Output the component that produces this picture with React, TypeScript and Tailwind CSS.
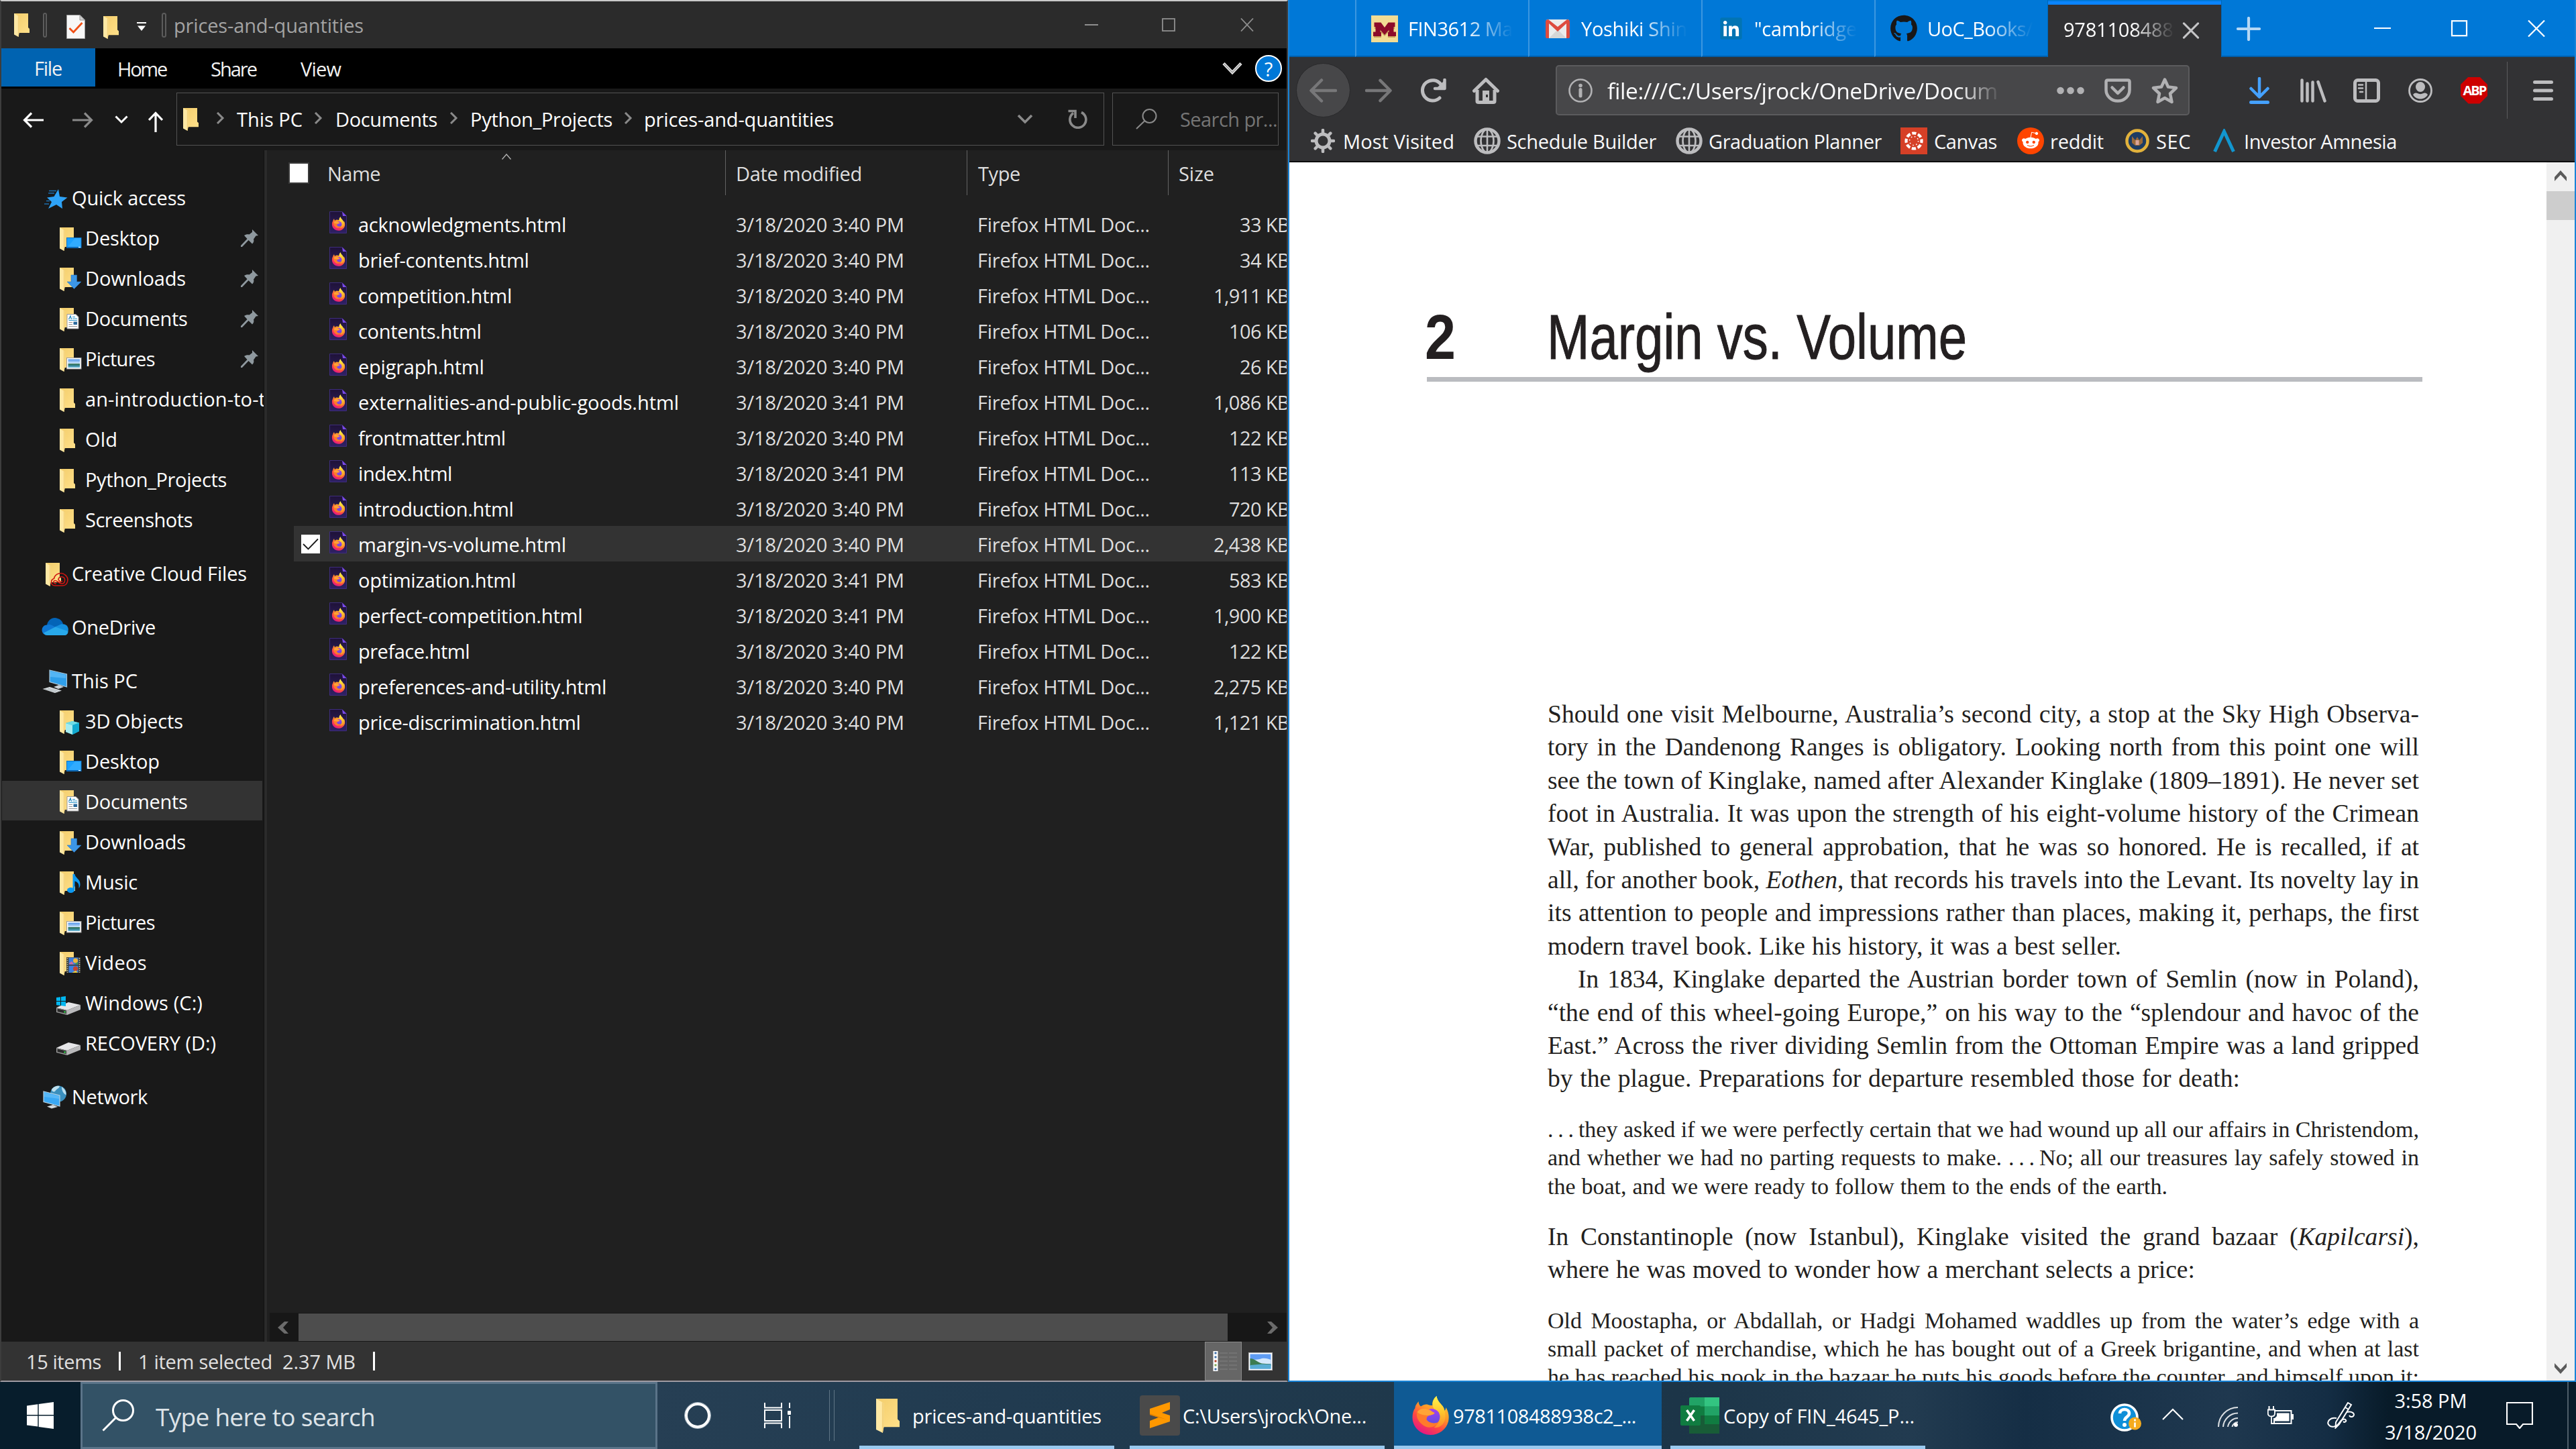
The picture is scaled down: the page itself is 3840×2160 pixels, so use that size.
import { useLayoutEffect, useRef, type ReactNode } from 'react'
import { FaGithub, FaLinkedin, FaRedditAlien } from 'react-icons/fa'

type TProps = { w?: number; mode?: 'letter' | 'word' | 'scale'; pad?: number; className?: string; children: ReactNode }

/* Single line of text whose tracking is tuned at mount so that it spans w pixels. */
function T({ w, mode = 'letter', pad = 3, className = '', children }: TProps) {
  const ref = useRef<HTMLSpanElement>(null)
  useLayoutEffect(() => {
    const el = ref.current
    if (!el || !w) return
    el.style.letterSpacing = '0px'
    el.style.wordSpacing = '0px'
    el.style.transform = 'none'
    const natural = el.getBoundingClientRect().width
    const text = el.textContent || ''
    const target = w + pad
    if (mode === 'letter') el.style.letterSpacing = `${(target - natural) / text.length}px`
    if (mode === 'word') el.style.wordSpacing = `${(target - natural) / Math.max(1, text.split(' ').length - 1)}px`
    if (mode === 'scale') el.style.transform = `scaleX(${target / natural})`
  }, [w, mode, pad])
  return (
    <span ref={ref} className={'inline-block shrink-0 origin-left whitespace-pre ' + (mode === 'letter' ? 'pl-[1px] ' : '') + className}>
      {children}
    </span>
  )
}

/* ---------- shared drawings ---------- */

function FolderShape() {
  return (
    <>
      <path d="M5 4H26V25L28 27V33H5Z" fill="url(#folderBack)" />
      <path d="M5 4L12.500 8.500V33L11.500 39L5 35.500Z" fill="#fee8a4" />
      <path d="M12.500 8.500V33L11.500 39L10.800 38.500V7.500Z" fill="#f3d27c" />
    </>
  )
}

function Folder({ className = '' }: { className?: string }) {
  return (
    <svg viewBox="5 4 23 35" preserveAspectRatio="none" className={'shrink-0 ' + className}>
      <FolderShape />
    </svg>
  )
}

function FirefoxShape() {
  return (
    <>
      <path
        d="M5 18C5 14 8 11 10 8C10.500 12 11.500 14 13.500 15.500C17 13 20 12 23 12.500C26 14 28 14 31 14C30 8 33 3 37 0C38 7 42 10 46 15C48 17 48.500 20 49 22C50.500 20 51 18 51 17C55 24 56 31 54.500 38C51.500 50 40.500 58 28 58C13 58 1 46 1 32C1 26 2.500 21 5 18Z"
        fill="url(#ffBody)"
      />
      <path d="M37 0C38 7 42 10 46 15C49 20 51 27 49.500 35C47.500 44 40 48 33 47C40 42 43 34 39 26C36 21 31 19 31 13C31 7 34 3 37 0Z" fill="url(#ffFlame)" />
      <circle cx="30" cy="31" r="12" fill="url(#ffGlobe)" />
      <path d="M8 24C12 18 19 18 24 20C29 21 30 24 34 25C33 28 29 28 26 29C23 30 22 32 22 35C25 40 33 42 40 39C36 47 23 50 15 42C9 37 6 30 8 24Z" fill="#ff7a2b" />
      <path d="M8 24C12 18 19 18 24 20C29 21 30 24 34 25C33 28 29 28 26 29C20 29 12 28 8 24Z" fill="#ffa436" />
    </>
  )
}

function Defs() {
  return (
    <svg className="absolute h-0 w-0">
      <defs>
        <linearGradient id="folderBack" x1="0" y1="0" x2="1" y2="1">
          <stop offset="0" stopColor="#f3cd6b" />
          <stop offset="1" stopColor="#ffe08a" />
        </linearGradient>
        <linearGradient id="ffBody" x1="0.8" y1="0.1" x2="0.3" y2="1">
          <stop offset="0" stopColor="#ffce35" />
          <stop offset="0.35" stopColor="#ff9a28" />
          <stop offset="0.65" stopColor="#ff4a41" />
          <stop offset="1" stopColor="#e31587" />
        </linearGradient>
        <linearGradient id="ffFlame" x1="0" y1="0" x2="0" y2="1">
          <stop offset="0" stopColor="#fff44f" />
          <stop offset="0.5" stopColor="#ffc72e" />
          <stop offset="1" stopColor="#ff8a2a" />
        </linearGradient>
        <linearGradient id="ffGlobe" x1="0" y1="0" x2="0" y2="1">
          <stop offset="0" stopColor="#a640f0" />
          <stop offset="1" stopColor="#5a4fe0" />
        </linearGradient>
        <linearGradient id="docPurple" x1="0" y1="0" x2="0" y2="1">
          <stop offset="0" stopColor="#1f1238" />
          <stop offset="1" stopColor="#2f2065" />
        </linearGradient>
        <linearGradient id="sky" x1="0" y1="0" x2="0" y2="1">
          <stop offset="0" stopColor="#4f93e8" />
          <stop offset="0.5" stopColor="#cfe6fa" />
          <stop offset="0.55" stopColor="#3f7a5a" />
          <stop offset="0.75" stopColor="#2f7f8c" />
          <stop offset="1" stopColor="#7cc4e4" />
        </linearGradient>
      </defs>
    </svg>
  )
}

function FirefoxDoc() {
  return (
    <svg viewBox="0 0 26 33" className="h-[33px] w-[26px] shrink-0">
      <path d="M0.500 0.500H19L25.500 7V32.500H0.500Z" fill="url(#docPurple)" stroke="#3d2d7c" />
      <path d="M19 0.500L25.500 7H20Z" fill="#7a4be8" />
      <svg x="3.500" y="8" width="20" height="21" viewBox="0 0 56 58">
        <FirefoxShape />
      </svg>
    </svg>
  )
}

/* ---------- file explorer ---------- */

type SideIcon =
  | 'star' | 'folder' | 'desktop' | 'downloads' | 'documents' | 'pictures' | 'music' | 'videos' | 'objects'
  | 'cloudfolder' | 'onedrive' | 'pc' | 'windrive' | 'drive' | 'network'

function DriveShape() {
  return (
    <>
      <path d="M0 27L18 19L36 23L16 31Z" fill="#e6e6e8" />
      <path d="M16 31L36 23V30L16 38Z" fill="#b9b9bb" />
      <path d="M0 27L16 31V38L0 34Z" fill="#9a9a9a" />
      <path d="M1.500 28.500L14.500 31.500V36L1.500 33Z" fill="#2a2a2a" />
      <circle cx="12.500" cy="33.500" r="1.200" fill="#2fe04a" />
    </>
  )
}

function SideGlyph({ kind }: { kind: SideIcon }) {
  const inFolder = ['folder', 'desktop', 'downloads', 'documents', 'pictures', 'music', 'videos', 'objects'].includes(kind)
  return (
    <svg viewBox="0 0 40 40" className="h-[40px] w-[40px] shrink-0 overflow-visible">
      {inFolder && <FolderShape />}
      {kind === 'star' && (
        <>
          <path d="M25 7L27 18L38.500 19.500L30 26L31 36L22 30L10 36L15 26L8 19.500L18.500 18Z" fill="#2ea3f7" />
          <path d="M11 9.500H22M10 13H19M7 24.500H12M4 29H11" stroke="#1c6fae" strokeWidth="1.300" />
        </>
      )}
      {kind === 'desktop' && (
        <>
          <rect x="15.500" y="19.500" width="21.500" height="15" fill="#1ba1ff" stroke="#0c72c4" />
          <path d="M16 34L28 20H36.500V34Z" fill="#3fb2ff" opacity="0.6" />
          <path d="M16 33.500H36.500" stroke="#0b5ea5" />
          <path d="M33 33.500H36" stroke="#fff" />
        </>
      )}
      {kind === 'downloads' && <path d="M22 15H30.500V25H37L26.500 35.500L16 25H22Z" fill="#3c96e6" stroke="#2a7bc6" strokeWidth="0.600" />}
      {kind === 'documents' && (
        <>
          <path d="M16 13.500H29L33 17.500V35H16Z" fill="#fff" stroke="#9a9a9a" />
          <path d="M24 17.500H28M24 20H31M18.500 22.500H31" stroke="#2a93c9" strokeWidth="1.200" />
          <path d="M18.500 21L21 16L22.500 21" stroke="#1f86bd" strokeWidth="1.300" fill="none" />
          <path d="M18.500 25.500H24M18.500 28.500H24M18.500 31.500H31" stroke="#8f8f8f" strokeWidth="1" />
          <rect x="25.500" y="24.500" width="5.500" height="4.500" fill="#2c6a9c" />
        </>
      )}
      {kind === 'pictures' && (
        <>
          <rect x="15.500" y="18.500" width="21.500" height="16.500" fill="#fff" stroke="#9d9d9d" />
          <rect x="17.500" y="20.500" width="17.500" height="12.500" fill="url(#sky)" />
        </>
      )}
      {kind === 'music' && (
        <>
          <ellipse cx="21.500" cy="32" rx="5.500" ry="4" fill="#0c98f0" />
          <path d="M24.500 8H27.500C28 14 36 15 35.500 24C35 27 34.500 28 33.500 29C34.500 22 31 19.500 27.500 18.500V32H24.500Z" fill="#0c98f0" />
        </>
      )}
      {kind === 'videos' && (
        <>
          <rect x="15" y="12" width="21" height="23" fill="#3a3a3a" />
          <path d="M16.500 13V35M34.500 13V35" stroke="#c9c9a0" strokeWidth="1.500" strokeDasharray="1.500 1.500" />
          <rect x="18.500" y="12.500" width="14" height="10.500" fill="#3b7fe0" />
          <rect x="18.500" y="24.500" width="14" height="10.500" fill="#3b7fe0" />
          <circle cx="28.500" cy="17" r="3.500" fill="#f0b53a" />
          <circle cx="28.500" cy="29" r="3.500" fill="#c8452e" />
          <path d="M19 21L23 18L26 22.500H19Z" fill="#d06a9a" />
          <path d="M24 34.500L29 32L32 35H24Z" fill="#f3d03a" />
          <path d="M27 22.500L32 19V22.500Z" fill="#3f9a3c" />
        </>
      )}
      {kind === 'objects' && (
        <>
          <path d="M14 23L24 20L34 22.500V35L24 40L14 36Z" fill="#2fc4d6" />
          <path d="M14 23L24 26V40L14 36Z" fill="#a6ecf0" />
          <path d="M14 23L24 20L34 22.500L24 26Z" fill="#6fdbe6" />
          <path d="M24 26L34 22.500V35L24 40Z" fill="#12a9d0" />
        </>
      )}
      {kind === 'cloudfolder' && (
        <>
          <g transform="translate(1 0)">
            <FolderShape />
          </g>
          <path d="M20 38C13 38 13 29 18.500 27.500C20 20 30 17 35 22C42 27 39 38 31 38Z" fill="none" stroke="#cf1512" strokeWidth="1.600" />
          <path d="M22 35C17 35 17 30.500 20 30.500C23 30 26 35 30 35C36 35 36 26 31 25C27 24 25 27 25 29C27 32 29 33 31 31" fill="none" stroke="#cf1512" strokeWidth="1.600" />
        </>
      )}
      {kind === 'onedrive' && (
        <>
          <path d="M8 17C9 9 17 4 24 7C28 8 31 11 32 15L18 24Z" fill="#0364b8" />
          <path d="M9 32C-2 32 -2 17 8 16.500C12 15 16 17 20 19.500L27 24L12 32Z" fill="#0f78d4" />
          <path d="M20 19.500L29 15.500C37 14 41 20 39.500 26L33 28Z" fill="#1490df" />
          <path d="M3 28.500L20.500 19.500L39.500 26C39.500 30 37 32 34 32H9C6 32 4 31 3 28.500Z" fill="#28a8ea" />
        </>
      )}
      {kind === 'pc' && (
        <>
          <path d="M12 4L37.500 10V29L12 21.500Z" fill="#2f9fea" stroke="#a9c9dd" strokeWidth="1.200" />
          <path d="M13 5.500L36 11V16L13 14Z" fill="#6cc4fb" opacity="0.6" />
          <path d="M18 29L26 26L33 29L25 32Z" fill="#c9d2d8" />
          <path d="M1.500 32L12 29L30 34.500L20 38Z" fill="#d9dee1" />
          <path d="M5 32L22 36.500M9 31L26 35.500" stroke="#9ba3a8" strokeWidth="0.700" />
        </>
      )}
      {kind === 'windrive' && (
        <>
          <DriveShape />
          <path d="M0 12L6 11.200V17H0ZM7 11L14 10V17H7ZM0 18H6V24L0 23.200ZM7 18H14V25L7 24Z" fill="#00b7f1" />
        </>
      )}
      {kind === 'drive' && <DriveShape />}
      {kind === 'network' && (
        <>
          <circle cx="25" cy="15.500" r="12" fill="#3a8fbd" />
          <path d="M15 9C18 4 24 3 27 4C26 8 22 8 20 12C18 13 15 12 15 9ZM30 5C34 8 37 12 36.500 17C33 16 30 11 30 5Z" fill="#bfe0ee" />
          <path d="M3 12L27 18V34L3 27.500Z" fill="#3aa8f4" stroke="#b7d3e3" strokeWidth="1.200" />
          <path d="M4 13.500L26 19V23L4 20Z" fill="#74c8fc" opacity="0.5" />
          <path d="M8 34.500L17 32L24 35L15 37.500Z" fill="#d3dade" />
        </>
      )}
    </svg>
  )
}

function Pin() {
  return (
    <svg viewBox="0 0 26 26" className="mr-[6px] ml-auto h-[26px] w-[26px] shrink-0">
      <path d="M17 0L26 9L22.500 9.500L19 14.500C20 17 19 19.500 17 21.500L11.500 16L2 26H0V24L9.500 14L5 9C7.500 7 10.500 7 12.500 7.500L17 4Z" fill="#8f999f" />
    </svg>
  )
}

type SideItem = { icon: SideIcon; label: string; w: number; child?: boolean; pin?: boolean; active?: boolean; gap?: boolean }

const sideItems: SideItem[] = [
  { icon: 'star', label: 'Quick access', w: 168 },
  { icon: 'desktop', label: 'Desktop', w: 109, child: true, pin: true },
  { icon: 'downloads', label: 'Downloads', w: 148, child: true, pin: true },
  { icon: 'documents', label: 'Documents', w: 150.5, child: true, pin: true },
  { icon: 'pictures', label: 'Pictures', w: 102, child: true, pin: true },
  { icon: 'folder', label: 'an-introduction-to-t', w: 267, child: true },
  { icon: 'folder', label: 'Old', w: 46, child: true },
  { icon: 'folder', label: 'Python_Projects', w: 209, child: true },
  { icon: 'folder', label: 'Screenshots', w: 158, child: true },
  { icon: 'cloudfolder', label: 'Creative Cloud Files', w: 259, gap: true },
  { icon: 'onedrive', label: 'OneDrive', w: 123, gap: true },
  { icon: 'pc', label: 'This PC', w: 96, gap: true },
  { icon: 'objects', label: '3D Objects', w: 144, child: true },
  { icon: 'desktop', label: 'Desktop', w: 109, child: true },
  { icon: 'documents', label: 'Documents', w: 150.5, child: true, active: true },
  { icon: 'downloads', label: 'Downloads', w: 148, child: true },
  { icon: 'music', label: 'Music', w: 76, child: true },
  { icon: 'pictures', label: 'Pictures', w: 102, child: true },
  { icon: 'videos', label: 'Videos', w: 90, child: true },
  { icon: 'windrive', label: 'Windows (C:)', w: 173, child: true },
  { icon: 'drive', label: 'RECOVERY (D:)', w: 193, child: true },
  { icon: 'network', label: 'Network', w: 111, gap: true },
]

function Sidebar() {
  return (
    <div className="w-[391px] shrink-0 overflow-hidden pt-[40px]">
      {sideItems.map((it, i) => (
        <div key={i} className={it.gap ? 'pt-[20px]' : ''}>
          <div className={'mr-[2px] ml-[1px] flex h-[60px] items-center pt-[1px] ' + (it.active ? 'border-b border-[#191919] bg-[#333333]' : '')}>
            <div className={it.child ? 'ml-[81px] flex' : 'mr-[2px] ml-[59px] flex'}>
              <SideGlyph kind={it.icon} />
            </div>
            <T w={it.w} className="ml-[2px] text-white">
              {it.label}
            </T>
            {it.pin && <Pin />}
          </div>
        </div>
      ))}
    </div>
  )
}

const files: [string, number, string, string][] = [
  ['acknowledgments.html', 308, '3/18/2020 3:40 PM', '33 KB'],
  ['brief-contents.html', 252.5, '3/18/2020 3:40 PM', '34 KB'],
  ['competition.html', 227, '3/18/2020 3:40 PM', '1,911 KB'],
  ['contents.html', 181.5, '3/18/2020 3:40 PM', '106 KB'],
  ['epigraph.html', 185.5, '3/18/2020 3:40 PM', '26 KB'],
  ['externalities-and-public-goods.html', 476, '3/18/2020 3:41 PM', '1,086 KB'],
  ['frontmatter.html', 217.5, '3/18/2020 3:40 PM', '122 KB'],
  ['index.html', 138, '3/18/2020 3:41 PM', '113 KB'],
  ['introduction.html', 229.5, '3/18/2020 3:40 PM', '720 KB'],
  ['margin-vs-volume.html', 308, '3/18/2020 3:40 PM', '2,438 KB'],
  ['optimization.html', 233, '3/18/2020 3:41 PM', '583 KB'],
  ['perfect-competition.html', 332.5, '3/18/2020 3:41 PM', '1,900 KB'],
  ['preface.html', 164, '3/18/2020 3:40 PM', '122 KB'],
  ['preferences-and-utility.html', 368, '3/18/2020 3:40 PM', '2,275 KB'],
  ['price-discrimination.html', 329.5, '3/18/2020 3:40 PM', '1,121 KB'],
]

function FileList() {
  return (
    <div className="flex min-w-0 flex-1 flex-col overflow-hidden bg-[#202020] text-[#dedede]">
      <div className="relative flex h-[67px] shrink-0">
        <svg viewBox="0 0 14 9" className="absolute top-[5px] left-[350px] h-[9px] w-[14px]">
          <path d="M0.500 8.500L7 1L13.500 8.500" fill="none" stroke="#b0b0b0" strokeWidth="1.400" />
        </svg>
        <div className="flex w-[684px] shrink-0 items-center border-r border-[#636363] pt-[2px]">
          <div className="mt-[-2px] ml-[32px] h-[32px] w-[31px] border-2 border-[#3a3a3a] bg-white" />
          <T w={77} className="ml-[26px]">Name</T>
        </div>
        <div className="flex w-[360px] shrink-0 items-center border-r border-[#636363] pt-[2px] pl-[14px]">
          <T w={186}>Date modified</T>
        </div>
        <div className="flex w-[300px] shrink-0 items-center border-r border-[#636363] pt-[2px] pl-[15px]">
          <T w={61}>Type</T>
        </div>
        <div className="flex items-center pt-[2px] pl-[14px]">
          <T w={51}>Size</T>
        </div>
      </div>
      <div className="mt-[16px] shrink-0">
        {files.map(([name, w, date, size], i) => (
          <div key={name} className={'ml-[40px] flex h-[53px] items-center ' + (i === 9 ? 'bg-[#333333]' : '')}>
            <div className="flex w-[53px] shrink-0 pl-[11px]">
              {i === 9 && (
                <svg viewBox="0 0 28 28" className="h-[28px] w-[28px]">
                  <rect width="28" height="28" fill="#fff" />
                  <path d="M3 14L10.500 21.500L25 6.500" fill="none" stroke="#1a1a1a" strokeWidth="1.800" />
                </svg>
              )}
            </div>
            <div className="mt-[-4px] flex">
              <FirefoxDoc />
            </div>
            <div className="flex w-[579px] shrink-0 pt-[2px] pl-[16px]">
              <T w={w} className="text-white">{name}</T>
            </div>
            <div className="flex w-[360px] shrink-0 pt-[2px]">
              <T w={249}>{date}</T>
            </div>
            <div className="flex w-[286px] shrink-0 pt-[2px]">
              <T w={255}>Firefox HTML Doc...</T>
            </div>
            <div className="flex w-[180px] shrink-0 justify-end pt-[2px]">
              <T w={size.length === 5 ? 72 : size.length === 6 ? 88 : 111}>{size}</T>
            </div>
          </div>
        ))}
      </div>
      <div className="mt-auto ml-[4px] flex h-[43px] shrink-0 items-center bg-[#171717]">
        <svg viewBox="0 0 16 18" className="ml-[12px] h-[18px] w-[16px]">
          <path d="M10 0H16L8 9L16 18H10L0 9Z" fill="#6b6b6b" />
        </svg>
        <div className="ml-[15px] h-[41px] w-[1385px] bg-[#4d4d4d]" />
        <svg viewBox="0 0 16 18" className="ml-[59px] h-[18px] w-[16px]">
          <path d="M6 0H0L8 9L0 18H6L16 9Z" fill="#6b6b6b" />
        </svg>
      </div>
    </div>
  )
}

function Crumb({ className }: { className: string }) {
  return (
    <svg viewBox="0 0 13 18" className={'mb-[3px] h-[18px] w-[13px] shrink-0 ' + className}>
      <path d="M2 1L10 9L2 17" fill="none" stroke="#8a8a8a" strokeWidth="3" />
    </svg>
  )
}

function Explorer() {
  return (
    <div className="flex h-[2060px] w-[1920px] shrink-0 flex-col overflow-hidden border-x-2 border-t-2 border-b-2 border-x-[#3d3d3d] border-t-[#c9c9c9] border-b-[#9f9ba3] bg-[#191919] text-[29px] leading-none">
      <div className="flex h-[70px] shrink-0 items-center bg-[#2b2b2b]">
        <Folder className="ml-[19px] h-[35px] w-[23px]" />
        <div className="ml-[20px] h-[37px] w-[6px] rounded-sm border-2 border-[#5c5c5c]" />
        <svg viewBox="0 0 28 36" className="mt-[6px] ml-[29px] h-[36px] w-[28px]">
          <path d="M0.500 0.500H20L27.500 8V35.500H0.500Z" fill="#f7f7f7" stroke="#9a9a9a" />
          <path d="M20 0.500V8H27.500Z" fill="#d0d0d0" stroke="#9a9a9a" />
          <path d="M4.500 20L10.500 26L23.500 12" fill="none" stroke="#f04f16" strokeWidth="2.800" />
        </svg>
        <Folder className="mt-[8px] ml-[27px] h-[34px] w-[23px]" />
        <svg viewBox="0 0 14 13" className="mt-[5px] ml-[27px] h-[13px] w-[14px]">
          <path d="M0 0H14V2H0ZM1 5.500H13L7 13Z" fill="#fff" />
        </svg>
        <div className="ml-[23px] h-[37px] w-[7px] rounded-sm border-2 border-[#5c5c5c]" />
        <T w={281} className="ml-[10px] text-[#a3a3a3]">prices-and-quantities</T>
        <svg viewBox="0 0 252 20" className="mr-[49px] ml-auto h-[20px] w-[252px]">
          <path d="M0 10H20M233 0.500L251 19.500M251 0.500L233 19.500" fill="none" stroke="#8f8f8f" strokeWidth="1.800" />
          <rect x="116" y="1" width="18" height="18" fill="none" stroke="#8f8f8f" strokeWidth="1.800" />
        </svg>
      </div>
      <div className="flex h-[60px] shrink-0 items-center bg-black text-[#f2f2f2]">
        <div className="flex h-[57px] w-[140px] items-center justify-center self-start bg-[#0063b1] pt-[2px] pr-[2px]">
          <T w={39}>File</T>
        </div>
        <T w={71} className="ml-[32px]">Home</T>
        <T w={66} className="ml-[65px]">Share</T>
        <T w={58} className="ml-[65px]">View</T>
        <svg viewBox="0 0 30 20" className="ml-auto h-[20px] w-[30px]">
          <path d="M2 2.500L15 16L28 2.500" fill="none" stroke="#e4e4e4" strokeWidth="4.500" />
          <path d="M3 3.500L15 16L27 3.500" fill="none" stroke="#9c9c9c" strokeWidth="1.500" />
        </svg>
        <div className="mr-[7px] ml-[19px] flex h-[40px] w-[40px] items-center justify-center rounded-full border-2 border-white bg-[#0078d7] text-[29px] text-white">?</div>
      </div>
      <div className="flex h-[92px] shrink-0 items-start pt-[6px]">
        <div className="flex h-[80px] items-center">
          <svg viewBox="0 0 31 24" className="mt-[2px] ml-[32px] h-[24px] w-[31px]">
            <path d="M31 12H3M13 1.500L2.500 12L13 22.500" fill="none" stroke="#fff" strokeWidth="3.200" />
          </svg>
          <svg viewBox="0 0 31 24" className="mt-[2px] ml-[43px] h-[24px] w-[31px]">
            <path d="M0 12H28M18 1.500L28.500 12L18 22.500" fill="none" stroke="#8a8a8a" strokeWidth="3.200" />
          </svg>
          <svg viewBox="0 0 20 13" className="ml-[32px] h-[13px] w-[20px]">
            <path d="M1.500 1.500L10 10L18.500 1.500" fill="none" stroke="#fff" strokeWidth="3" />
          </svg>
          <svg viewBox="0 0 22 31" className="mt-[6px] ml-[30px] h-[31px] w-[22px]">
            <path d="M11 31V3M1 13L11 2.500L21 13" fill="none" stroke="#fff" strokeWidth="3.200" />
          </svg>
        </div>
        <div className="ml-[20px] flex h-[79px] w-[1383px] items-center border border-[#535353] text-white">
          <Folder className="ml-[9px] h-[34px] w-[23px]" />
          <Crumb className="ml-[26px]" />
          <T w={96} className="ml-[17px]">This PC</T>
          <Crumb className="ml-[17px]" />
          <T w={150} className="ml-[18px]">Documents</T>
          <Crumb className="ml-[18px]" />
          <T w={210} className="ml-[17px]">Python_Projects</T>
          <Crumb className="ml-[17px]" />
          <T w={281} className="ml-[16px]">prices-and-quantities</T>
          <svg viewBox="0 0 24 15" className="ml-auto h-[15px] w-[24px]">
            <path d="M2 2L12 12L22 2" fill="none" stroke="#8a8a8a" strokeWidth="3.600" />
          </svg>
          <svg viewBox="0 0 30 29" className="mr-[23px] ml-[52px] h-[29px] w-[30px]">
            <path d="M20 4.500A12 12 0 1 1 8 5.500" fill="none" stroke="#8a8a8a" strokeWidth="3.600" />
            <path d="M0.500 2.500H11V13" fill="none" stroke="#8a8a8a" strokeWidth="3.600" />
          </svg>
        </div>
        <div className="ml-[12px] flex h-[79px] w-[248px] items-center border border-[#535353] text-[#757575]">
          <svg viewBox="0 0 32 31" className="ml-[34px] h-[31px] w-[32px]">
            <circle cx="20.500" cy="11" r="10" fill="none" stroke="#8a8a8a" strokeWidth="2" />
            <path d="M13 18.500L1 30" stroke="#8a8a8a" strokeWidth="2" />
          </svg>
          <T w={143} className="ml-[33px]">Search pr...</T>
        </div>
      </div>
      <div className="flex min-h-0 flex-1">
        <Sidebar />
        <div className="w-[5px] shrink-0 border-l border-[#101010] bg-[#2b2b2b]" />
        <FileList />
      </div>
      <div className="flex h-[58px] shrink-0 items-center bg-[#333333] text-[#e0e0e0]">
        <T w={110} className="ml-[36px]">15 items</T>
        <div className="ml-[26px] h-[28px] w-[3px] bg-white" />
        <T w={198} className="ml-[25px]">1 item selected</T>
        <T w={107} className="ml-[14px]">2.37 MB</T>
        <div className="ml-[26px] h-[28px] w-[3px] bg-white" />
        <div className="ml-auto flex h-[58px] w-[55px] items-center border border-[#8a8a8a] bg-[#666666]">
          <svg viewBox="0 0 53 32" className="h-[32px] w-[53px]">
            {[2, 8, 14, 20, 26].map((y, i) => (
              <g key={y}>
                <rect x="11.500" y={y - 1} width="7" height="6" fill="#fff" />
                <rect x="13.500" y={y + 0.5} width="3" height="3" fill={['#3f6fa8', '#3f6fa8', '#b5432a', '#7ca356', '#3f6fa8'][i]} />
                <path d={`M21 ${y + 2}H33M35 ${y + 2}H47`} stroke="#808080" />
              </g>
            ))}
          </svg>
        </div>
        <svg viewBox="0 0 36 27" className="mr-[21px] ml-[10px] h-[27px] w-[36px]">
          <rect x="0.500" y="0.500" width="35" height="26" fill="#fff" stroke="#b0b0b0" />
          <rect x="2.500" y="2.500" width="31" height="22" fill="#5f9cf3" />
          <path d="M2.500 13C8 9 14 12 20 9C26 8 30 10 33.500 11V17H2.500Z" fill="#d5e8fb" />
          <path d="M2.500 9C9 9 12 14 20 16.500L33.500 17.500V20H2.500Z" fill="#3c7c50" />
          <path d="M2.500 19L20 17.500L33.500 18V24.500H2.500Z" fill="#58acd3" />
        </svg>
      </div>
    </div>
  )
}

/* ---------- browser ---------- */

function Tab({ icon, label, w }: { icon: ReactNode; label: string; w: number }) {
  return (
    <div className="flex h-[85px] w-[258px] shrink-0 items-center border-b-2 border-l-2 border-b-[#005fab] border-l-[#3c97e0] pt-[2px] pl-[22px]">
      <div className="flex w-[40px] shrink-0 justify-center">{icon}</div>
      <div className="ml-[14px] overflow-hidden py-[6px] text-white [mask-image:linear-gradient(to_right,black_55%,transparent_100%)]">
        <T w={w}>{label}</T>
      </div>
    </div>
  )
}

function Globe({ className }: { className: string }) {
  return (
    <svg viewBox="0 0 40 40" className={'h-[40px] w-[40px] shrink-0 ' + className}>
      <g fill="none" stroke="#bdbdbf">
        <circle cx="20" cy="20" r="17.500" strokeWidth="4.500" />
        <ellipse cx="20" cy="20" rx="9.500" ry="17" strokeWidth="2.600" />
        <path d="M20 3V37M4 13.500H36M4 27H36" strokeWidth="2.600" />
      </g>
    </svg>
  )
}

function BrowserTabs() {
  return (
    <div className="flex h-[85px] shrink-0 items-center bg-[#0078d7]">
      <div className="h-[85px] w-[98px] shrink-0 border-b-2 border-[#005fab]" />
      <Tab
        label="FIN3612 Ma"
        w={154}
        icon={
          <svg viewBox="0 0 40 40" className="h-[40px] w-[40px]">
            <rect width="40" height="40" fill="#f2dc94" />
            <path d="M5 13H14.500L20 20L25.500 13H35V20H33V26H36V33H25V27H26.500V24L20 31L13.500 24V27H15V33H4V26H7V20H5Z" fill="#c9a45d" />
            <path d="M4.500 10.500H14.500L20 18L25.500 10.500H35.500V17H33.500V24.500H37V31H25V25H26.500V21.500L20 29L13.500 21.500V25H15V31H3V24.500H6.500V17H4.500Z" fill="#8d0b2a" />
          </svg>
        }
      />
      <Tab
        label="Yoshiki Shin"
        w={156}
        icon={
          <svg viewBox="0 0 36 28" className="h-[28px] w-[36px]">
            <rect x="1" y="0" width="34" height="28" rx="2" fill="#ececec" />
            <path d="M5 28L18 15L31 28Z" fill="#d6d6d6" />
            <path d="M5 28V6L18 18L31 6V28H34C35.500 28 36 27 36 26V3C36 1 34 0 32 0L18 11L4 0C2 0 0 1 0 3V26C0 27 0.500 28 2 28Z" fill="#dd4b3e" />
          </svg>
        }
      />
      <Tab label={'"cambridge'} w={151} icon={<FaLinkedin className="h-[37px] w-[37px] bg-[linear-gradient(white,white)] bg-[length:25px_27px] bg-center bg-no-repeat text-[#0274b3]" />} />
      <Tab label="UoC_Books/" w={155} icon={<FaGithub className="h-[41px] w-[41px] text-[#191717]" />} />
      <div className="flex h-[85px] w-[260px] shrink-0 items-center border-x border-[#0067b8] pt-[2px]">
        <div className="flex h-[83px] w-full items-center border-t-[5px] border-[#0a84ff] bg-[#323234] pb-[5px] pl-[22px]">
          <div className="w-[167px] overflow-hidden py-[6px] text-white [mask-image:linear-gradient(to_right,black_62%,transparent_100%)]">
            <T w={178}>97811084889</T>
          </div>
          <svg viewBox="0 0 26 26" className="mt-[3px] ml-[11px] h-[25px] w-[26px]">
            <path d="M2 2L24 24M24 2L2 24" stroke="#c4c4c6" strokeWidth="3.200" strokeLinecap="round" />
          </svg>
        </div>
      </div>
      <div className="flex h-[85px] flex-1 items-center border-b-2 border-[#005fab] pt-[2px]">
        <svg viewBox="0 0 36 36" className="ml-[22px] h-[36px] w-[36px]">
          <path d="M18 2V34M2 18H34" stroke="#b6d8f5" strokeWidth="4.200" strokeLinecap="round" />
        </svg>
        <svg viewBox="0 0 255 25" className="mr-[44px] ml-auto h-[25px] w-[255px]">
          <path d="M0 12H25M230 0.500L254 24.500M254 0.500L230 24.500" fill="none" stroke="#fff" strokeWidth="2.200" />
          <rect x="116" y="1.200" width="22" height="22" fill="none" stroke="#fff" strokeWidth="2.200" />
        </svg>
      </div>
    </div>
  )
}

function BrowserToolbar() {
  return (
    <div className="flex h-[99px] shrink-0 items-center">
      <div className="ml-[10px] flex h-[81px] w-[81px] items-center justify-center rounded-full border border-[#29292b] bg-[#474749]">
        <svg viewBox="0 0 41 36" className="h-[36px] w-[41px]">
          <path d="M39 18H3M18 2.500L2.500 18L18 33.500" fill="none" stroke="#777779" strokeWidth="4.500" strokeLinecap="round" strokeLinejoin="round" />
        </svg>
      </div>
      <svg viewBox="0 0 41 36" className="ml-[22px] h-[36px] w-[40px]">
        <path d="M2 18H38M23 2.500L38.500 18L23 33.500" fill="none" stroke="#777779" strokeWidth="4.500" strokeLinecap="round" strokeLinejoin="round" />
      </svg>
      <svg viewBox="0 0 39 36" className="ml-[42px] h-[36px] w-[39px]">
        <path d="M29 29A15.200 15.200 0 1 1 31 9" fill="none" stroke="#bdbdbf" strokeWidth="5" strokeLinecap="round" />
        <path d="M36.500 2V15H22" fill="none" stroke="#bdbdbf" strokeWidth="4.500" strokeLinecap="round" strokeLinejoin="round" />
        <path d="M36 3V15H24Z" fill="#bdbdbf" />
      </svg>
      <svg viewBox="0 0 40 40" className="ml-[39px] h-[40px] w-[40px]">
        <path d="M2.500 20.500L20 3.500L37.500 20.500" fill="none" stroke="#bdbdbf" strokeWidth="5" strokeLinecap="round" strokeLinejoin="round" />
        <path d="M7 19V36C7 37 8 37.500 9 37.500H31C32 37.500 33 37 33 36V19" fill="none" stroke="#bdbdbf" strokeWidth="5" />
        <path d="M15 20H25V36H15Z" fill="#bdbdbf" />
        <rect x="20" y="26" width="3" height="4" fill="#323234" />
      </svg>
      <div className="ml-[84px] flex h-[75px] w-[945px] shrink-0 items-center rounded-[5px] border-2 border-[#5b5b5d] bg-[#474749]">
        <svg viewBox="0 0 36 36" className="ml-[17px] h-[36px] w-[36px] shrink-0">
          <circle cx="18" cy="18" r="16.500" fill="none" stroke="#b1b1b3" strokeWidth="2.600" />
          <circle cx="18" cy="10.500" r="2.800" fill="#b1b1b3" />
          <path d="M18 16.500V26" stroke="#b1b1b3" strokeWidth="5" strokeLinecap="round" />
        </svg>
        <div className="ml-[21px] overflow-hidden pt-[8px] pb-[6px] text-[33.500px] text-[#f9f9fa] [mask-image:linear-gradient(to_right,black_90%,transparent_101%)]">
          <T w={580}>file:///C:/Users/jrock/OneDrive/Docum</T>
        </div>
        <svg viewBox="0 0 42 12" className="ml-auto h-[12px] w-[42px]">
          <circle cx="5.500" cy="6" r="5.300" fill="#b1b1b3" />
          <circle cx="20.500" cy="6" r="5.300" fill="#b1b1b3" />
          <circle cx="35.500" cy="6" r="5.300" fill="#b1b1b3" />
        </svg>
        <svg viewBox="0 0 40 36" className="ml-[29px] h-[36px] w-[40px]">
          <path d="M2.500 5C2.500 3.500 3.500 2.500 5 2.500H35C36.500 2.500 37.500 3.500 37.500 5V17C37.500 26 30 33.500 20 33.500S2.500 26 2.500 17Z" fill="none" stroke="#b1b1b3" strokeWidth="4.500" />
          <path d="M11.500 13.500L20 22L28.500 13.500" fill="none" stroke="#b1b1b3" strokeWidth="4.500" strokeLinecap="round" strokeLinejoin="round" />
        </svg>
        <svg viewBox="0 0 40 40" className="mr-[15px] ml-[30px] h-[40px] w-[40px]">
          <path d="M20 3.500L25 14.500L37 16L28 24.500L30.500 37L20 31L9.500 37L12 24.500L3 16L15 14.500Z" fill="none" stroke="#b1b1b3" strokeWidth="4.500" strokeLinejoin="round" />
        </svg>
      </div>
      <svg viewBox="0 0 30 40" className="ml-[89px] h-[40px] w-[30px]">
        <path d="M15 2V29M2.500 17L15 29.500L27.500 17" fill="none" stroke="#45a1ff" strokeWidth="4.500" strokeLinecap="round" strokeLinejoin="round" />
        <path d="M2.500 37.500H27.500" stroke="#45a1ff" strokeWidth="5" strokeLinecap="round" />
      </svg>
      <svg viewBox="0 0 39 36" className="ml-[46px] h-[36px] w-[39px]">
        <path d="M2.500 2.500V33.500M10.500 7.500V33.500M18.500 5.500V33.500M26.500 5L36.500 33.500" fill="none" stroke="#bdbdbf" strokeWidth="4.500" strokeLinecap="round" />
      </svg>
      <svg viewBox="0 0 40 36" className="ml-[40px] h-[36px] w-[40px]">
        <rect x="2.500" y="2.500" width="35" height="31" rx="4" fill="none" stroke="#bdbdbf" strokeWidth="5" />
        <path d="M19 3V33" stroke="#bdbdbf" strokeWidth="2.500" />
        <path d="M8 9.500H14M8 14.500H14M10 20H14" stroke="#bdbdbf" strokeWidth="2.600" strokeLinecap="round" />
      </svg>
      <svg viewBox="0 0 36 36" className="ml-[42px] h-[36px] w-[36px]">
        <circle cx="18" cy="18" r="16.500" fill="none" stroke="#bdbdbf" strokeWidth="2.800" />
        <ellipse cx="18" cy="12.500" rx="7" ry="7.500" fill="#bdbdbf" />
        <path d="M7 24C9 21 12 21 13.500 22C16 23.500 20 23.500 22.500 22C24 21 27 21 29 24C27 28 23 30.500 18 30.500S9 28 7 24Z" fill="#bdbdbf" />
      </svg>
      <div className="ml-[42px] flex h-[40px] w-[40px] items-center justify-center bg-[#cd0000] [clip-path:polygon(29%_0,71%_0,100%_29%,100%_71%,71%_100%,29%_100%,0_71%,0_29%)]">
        <T w={34} pad={1} className="text-[20px] font-bold text-white">ABP</T>
      </div>
      <div className="ml-[29px] h-[85px] w-[1px] bg-[#5b5b5d]" />
      <svg viewBox="0 0 30 30" className="ml-[38px] h-[30px] w-[30px]">
        <path d="M2.500 2.500H27.500M2.500 15H27.500M2.500 27.500H27.500" stroke="#bdbdbf" strokeWidth="5" strokeLinecap="round" />
      </svg>
    </div>
  )
}

function Bookmarks() {
  return (
    <div className="flex h-[58px] shrink-0 items-center border-b-2 border-[#0c0c0d] pb-[4px] text-[#f9f9fa]">
      <svg viewBox="0 0 36 36" className="ml-[32px] h-[36px] w-[36px]">
        <circle cx="18" cy="18" r="10" fill="none" stroke="#bdbdbf" strokeWidth="5" />
        <path d="M18 2V6M18 30V34M2 18H6M30 18H34M6.700 6.700L9.500 9.500M26.500 26.500L29.300 29.300M29.300 6.700L26.500 9.500M9.500 26.500L6.700 29.300" stroke="#bdbdbf" strokeWidth="4.500" strokeLinecap="round" />
      </svg>
      <T w={164} className="ml-[11px]">Most Visited</T>
      <Globe className="ml-[29px]" />
      <T w={221} className="ml-[8px]">Schedule Builder</T>
      <Globe className="ml-[29px]" />
      <T w={256} className="ml-[8px]">Graduation Planner</T>
      <svg viewBox="0 0 40 40" className="ml-[28px] h-[40px] w-[40px]">
        <rect width="40" height="40" fill="#d64027" />
        <circle cx="20" cy="20" r="11.500" fill="none" stroke="#fff" strokeWidth="4.200" strokeDasharray="6.200 2.830" strokeDashoffset="3.100" />
        <circle cx="20" cy="20" r="6.500" fill="none" stroke="#fff" strokeWidth="1.600" strokeDasharray="1.600 3.500" />
      </svg>
      <T w={92} className="ml-[9px]">Canvas</T>
      <div className="ml-[30px] flex h-[40px] w-[40px] items-center justify-center rounded-full bg-[#ff4500]">
        <FaRedditAlien className="mb-[2px] h-[28px] w-[28px] text-white" />
      </div>
      <T w={78} className="ml-[8px]">reddit</T>
      <svg viewBox="0 0 36 36" className="ml-[32px] h-[36px] w-[36px]">
        <circle cx="18" cy="18" r="15.500" fill="#1d3c63" stroke="#e2b23c" strokeWidth="4.500" />
        <path d="M10 11L15 17L18 12L21 17L26 11V21L21 25H15L10 21Z" fill="#9a6a3a" />
        <rect x="15.500" y="17" width="5" height="7" fill="#d9a59a" />
      </svg>
      <T w={50} className="ml-[9px]">SEC</T>
      <svg viewBox="0 0 33 36" className="ml-[33px] h-[36px] w-[33px]">
        <path d="M2.500 34L16.500 4L30.500 34" fill="none" stroke="#1296cf" strokeWidth="5" />
      </svg>
      <T w={226} className="ml-[12px]">Investor Amnesia</T>
    </div>
  )
}

type Line = { t: ReactNode; w?: number; indent?: boolean }

const FULL = 1298

const body1: Line[] = [
  { t: 'Should one visit Melbourne, Australia’s second city, a stop at the Sky High Observa-' },
  { t: 'tory in the Dandenong Ranges is obligatory. Looking north from this point one will' },
  { t: 'see the town of Kinglake, named after Alexander Kinglake (1809–1891). He never set' },
  { t: 'foot in Australia. It was upon the strength of his eight-volume history of the Crimean' },
  { t: 'War, published to general approbation, that he was so honored. He is recalled, if at' },
  { t: <>all, for another book, <i>Eothen</i>, that records his travels into the Levant. Its novelty lay in</> },
  { t: 'its attention to people and impressions rather than places, making it, perhaps, the first' },
  { t: 'modern travel book. Like his history, it was a best seller.', w: 854 },
  { t: 'In 1834, Kinglake departed the Austrian border town of Semlin (now in Poland),', w: FULL - 45, indent: true },
  { t: '“the end of this wheel-going Europe,” on his way to the “splendour and havoc of the' },
  { t: 'East.” Across the river dividing Semlin from the Ottoman Empire was a land gripped' },
  { t: 'by the plague. Preparations for departure resembled those for death:', w: 1031 },
]
const quote1: Line[] = [
  { t: '.\u2009.\u2009.\u2009they asked if we were perfectly certain that we had wound up all our affairs in Christendom,' },
  { t: 'and whether we had no parting requests to make. .\u2009.\u2009.\u2009No; all our treasures lay safely stowed in' },
  { t: 'the boat, and we were ready to follow them to the ends of the earth.', w: 923 },
]
const body2: Line[] = [
  { t: <>In Constantinople (now Istanbul), Kinglake visited the grand bazaar (<i>Kapilcarsi</i>),</> },
  { t: 'where he was moved to wonder how a merchant selects a price:', w: 964 },
]
const quote2: Line[] = [
  { t: 'Old Moostapha, or Abdallah, or Hadgi Mohamed waddles up from the water’s edge with a' },
  { t: 'small packet of merchandise, which he has bought out of a Greek brigantine, and when at last' },
  { t: 'he has reached his nook in the bazaar he puts his goods before the counter, and himself upon it;' },
]

function Lines({ lines, className }: { lines: Line[]; className: string }) {
  return (
    <div className={className}>
      {lines.map((l, i) => (
        <div key={i} className={'flex ' + (l.indent ? 'pl-[45px]' : '')}>
          <T w={l.w ?? FULL} mode="word" pad={1}>{l.t}</T>
        </div>
      ))}
    </div>
  )
}

function Page() {
  return (
    <div className="flex min-h-0 flex-1 bg-white">
      <div className="min-w-0 flex-1 overflow-hidden pt-[214.500px] font-['Liberation_Serif',serif] text-[#231f20]">
        <div className="flex pl-[202px] font-['Liberation_Sans',sans-serif] text-[94px] leading-[91px]">
          <div className="w-[182px] font-bold">
            <T w={46} pad={0} mode="scale">2</T>
          </div>
          <T w={626} pad={0} mode="scale" className="[-webkit-text-stroke:1px_#231f20]">Margin vs. Volume</T>
        </div>
        <div className="mt-[14.500px] ml-[205px] h-[7px] w-[1484px] bg-[#babcc0]" />
        <div className="mt-[471px] ml-[385px]">
          <Lines lines={body1} className="text-[37.600px] leading-[49.400px]" />
          <Lines lines={quote1} className="mt-[30.300px] text-[34px] leading-[42.300px]" />
          <Lines lines={body2} className="mt-[28.500px] text-[37.600px] leading-[49.400px]" />
          <Lines lines={quote2} className="mt-[30.500px] text-[34px] leading-[42.300px]" />
        </div>
      </div>
      <div className="flex w-[42px] shrink-0 flex-col items-center bg-[#f0f0f0]">
        <svg viewBox="0 0 18 16" className="mt-[12px] h-[16px] w-[18px]">
          <path d="M0 10L9 0L18 10V16L9 6.500L0 16Z" fill="#5a5a5a" />
        </svg>
        <div className="mt-[15px] h-[43px] w-full bg-[#cdcdcd]" />
        <svg viewBox="0 0 18 16" className="mt-auto mb-[10px] h-[16px] w-[18px]">
          <path d="M0 6L9 16L18 6V0L9 9.500L0 0Z" fill="#5a5a5a" />
        </svg>
      </div>
    </div>
  )
}

function Browser() {
  return (
    <div className="flex h-[2060px] w-[1920px] shrink-0 flex-col overflow-hidden border-x-2 border-b-2 border-[#1883d7] bg-[#323234] text-[29px] leading-none">
      <BrowserTabs />
      <BrowserToolbar />
      <Bookmarks />
      <Page />
    </div>
  )
}

/* ---------- taskbar ---------- */

function Task({ className, children }: { className: string; children: ReactNode }) {
  return <div className={'flex h-[100px] shrink-0 items-center border-b-[5px] border-[#99c9ef] pt-[5px] text-white ' + className}>{children}</div>
}

function Taskbar() {
  return (
    <div className="flex h-[100px] w-[3840px] shrink-0 items-center bg-[linear-gradient(to_right,#071d2c_0px,#071d2c_120px,#263f54_980px,#213b50_1500px,#1f384b_2080px,#1c3548_2500px,#223b50_2850px,#152e45_3020px,#1f384f_3320px,#142d44_3470px,#081b29_3560px,#081b29_3840px)] text-[29px] leading-none">
      <div className="flex h-[100px] w-[120px] shrink-0 items-center justify-center">
        <svg viewBox="0 0 40 40" className="h-[40px] w-[40px]">
          <path d="M0 5.500L16.300 3.200V19H0ZM17.700 3L40 0V19H17.700ZM0 20.500H16.300V36.500L0 34.500ZM17.700 20.500H40V40L17.700 37Z" fill="#fff" />
        </svg>
      </div>
      <div className="flex h-[100px] w-[860px] shrink-0 items-center border-[3px] border-[#5b7489] bg-[#335266] text-[37px] text-[#dde3e8]">
        <svg viewBox="0 0 48 48" className="ml-[29px] h-[48px] w-[48px]">
          <circle cx="31.500" cy="16.500" r="15" fill="none" stroke="#fff" strokeWidth="3" />
          <path d="M20.500 27.500L1.500 46.500" stroke="#fff" strokeWidth="3" />
        </svg>
        <T w={325} className="ml-[31px] pt-[3px]">Type here to search</T>
      </div>
      <div className="ml-[40px] flex h-[40px] w-[40px] shrink-0 rounded-full border-[1.500px] border-[#9fb0bd]">
        <div className="h-full w-full rounded-full border-[4px] border-white" />
      </div>
      <svg viewBox="0 0 40 38" className="ml-[79px] h-[38px] w-[40px]">
        <g fill="none" stroke="#fff" strokeWidth="2">
          <path d="M1 0V7.500H26V0M1 38V30.500H26V38M38 0V8M38 20V38" />
          <rect x="1" y="11" width="25" height="16" />
        </g>
        <rect x="35" y="12" width="5" height="6" rx="1" fill="#fff" />
      </svg>
      <div className="ml-[57px] h-[76px] w-[8px] border-x border-[#5f7585]" />
      <Task className="ml-[37px] w-[380px]">
        <Folder className="ml-[25px] h-[51px] w-[35px]" />
        <T w={280} className="ml-[18px]">prices-and-quantities</T>
      </Task>
      <Task className="ml-[23px] w-[380px]">
        <svg viewBox="0 0 60 60" className="ml-[15px] h-[60px] w-[60px]">
          <rect width="60" height="60" rx="4" fill="#4a4a4a" />
          <path d="M45 10V21L33 26L45 30V39L15 49V38L28 33L15 29V20Z" fill="#ff9800" />
          <path d="M28 33L15 29L15 27L40 36Z" fill="#e07f00" />
        </svg>
        <T w={272} className="ml-[3px]">C:\Users\jrock\One...</T>
      </Task>
      <Task className="ml-[14px] w-[399px] bg-[#0f5a94]">
        <svg viewBox="0 0 56 58" className="ml-[26px] h-[58px] w-[57px]">
          <FirefoxShape />
        </svg>
        <T w={271} className="ml-[4px]">9781108488938c2_...</T>
      </Task>
      <Task className="ml-[13px] w-[380px]">
        <svg viewBox="0 0 58 54" className="ml-[15px] h-[54px] w-[58px]">
          <rect x="13" width="45" height="54" rx="2" fill="#21a366" />
          <rect x="36" width="22" height="13.500" fill="#33c481" />
          <rect x="36" y="13.500" width="22" height="13.500" fill="#21a366" />
          <rect x="13" y="13.500" width="23" height="13.500" fill="#107c41" />
          <rect x="36" y="27" width="22" height="13" fill="#107c41" />
          <rect x="13" y="27" width="23" height="13" fill="#185c37" />
          <rect x="13" y="40" width="45" height="14" fill="#185c37" />
          <rect y="12" width="30" height="30" rx="2" fill="#107c41" />
          <path d="M9.500 19L20.500 35M20.500 19L9.500 35" stroke="#fff" strokeWidth="3.600" />
        </svg>
        <T w={283} className="ml-[5px]">Copy of FIN_4645_P...</T>
      </Task>

      <svg viewBox="0 0 46 42" className="mt-[5px] ml-[276px] h-[42px] w-[46px] shrink-0">
        <circle cx="21" cy="21" r="19" fill="#0f8fd8" stroke="#fff" strokeWidth="3.600" />
        <path d="M14 15C14 7 28 7 28 15C28 20 21 20 21 26" fill="none" stroke="#fff" strokeWidth="4.600" />
        <circle cx="21" cy="32" r="3" fill="#fff" />
        <circle cx="36.500" cy="30" r="9.500" fill="#f5ab1e" />
        <path d="M36.500 28.500V35.500M36.500 23.500V26.500" stroke="#fff" strokeWidth="2.600" />
      </svg>
      <svg viewBox="0 0 32 18" className="mb-[4px] ml-[31px] h-[18px] w-[32px] shrink-0">
        <path d="M1 17L16 2L31 17" fill="none" stroke="#fff" strokeWidth="2.200" />
      </svg>
      <svg viewBox="0 0 30 30" className="mt-[4px] ml-[51px] h-[30px] w-[30px] shrink-0">
        <g fill="none" stroke="#fff" strokeWidth="2">
          <path d="M1 30A29 29 0 0 1 30 1M8 30A22 22 0 0 1 30 9.500M15 30A15 15 0 0 1 30 17M21.500 30A8.500 8.500 0 0 1 30 23" opacity="0.85" />
        </g>
        <circle cx="27" cy="27" r="3" fill="#fff" />
      </svg>
      <svg viewBox="0 0 39 28" className="ml-[44px] h-[28px] w-[39px] shrink-0">
        <path d="M10 7H35.500V26H10V18" fill="none" stroke="#fff" strokeWidth="2" />
        <path d="M36 12H39V20H36Z" fill="#fff" />
        <path d="M14 10.500H32.500V22.500H10V19L14 15Z" fill="#fff" />
        <path d="M2.500 0V6M9 0V6" stroke="#fff" strokeWidth="2" />
        <path d="M0.800 5.500H11V11C11 14 9 15.500 6 15.500S0.800 14 0.800 11ZM6 15V26H12" fill="none" stroke="#fff" strokeWidth="1.800" />
      </svg>
      <svg viewBox="0 0 41 40" className="ml-[50px] h-[40px] w-[41px] shrink-0">
        <g fill="none" stroke="#fff" strokeWidth="2">
          <path d="M31 1L36 4L18 33L12.500 38.500L13 30Z" />
          <path d="M27 8L32 11" />
          <path d="M14 24C4 22 -1 30 2.500 34C6 39 14 37 18 31C21 26 26 24 28 27C29 29 26 31 24 29M29 15C38 13 42 18 39 21C37 23 34 22 33 20" />
        </g>
      </svg>
      <div className="ml-[36px] flex w-[154px] shrink-0 flex-col items-center pt-[2px] leading-[47px] text-white">
        <T w={106}>3:58 PM</T>
        <T w={135}>3/18/2020</T>
      </div>
      <svg viewBox="0 0 40 40" className="ml-[36px] h-[40px] w-[40px] shrink-0">
        <path d="M1 1H39V33H25L20 39L15 33H1Z" fill="none" stroke="#fff" strokeWidth="2.200" />
      </svg>
      <div className="ml-[51px] h-[100px] w-[2px] bg-[#4d5d69]" />
    </div>
  )
}

export default function App() {
  return (
    <div className="flex h-[2160px] w-[3840px] flex-col overflow-hidden bg-black font-['Open_Sans','Noto_Sans',sans-serif]">
      <Defs />
      <div className="flex h-[2060px]">
        <Explorer />
        <Browser />
      </div>
      <Taskbar />
    </div>
  )
}
